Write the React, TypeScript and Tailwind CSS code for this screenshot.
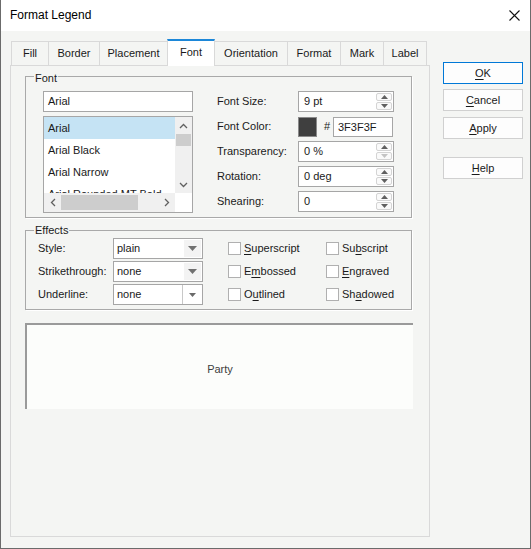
import React from "react";

const F = "font-['Liberation_Sans',Arial,sans-serif]";

const ChevUp = () => (
  <svg width="9" height="6" viewBox="0 0 9 6"><path d="M1 5 L4.5 1.5 L8 5" fill="none" stroke="#606060" strokeWidth="1.3" /></svg>
);
const ChevDown = () => (
  <svg width="9" height="6" viewBox="0 0 9 6"><path d="M1 1 L4.5 4.5 L8 1" fill="none" stroke="#606060" strokeWidth="1.3" /></svg>
);
const ChevLeft = () => (
  <svg width="6" height="9" viewBox="0 0 6 9"><path d="M5 1 L1.5 4.5 L5 8" fill="none" stroke="#606060" strokeWidth="1.3" /></svg>
);
const ChevRight = () => (
  <svg width="6" height="9" viewBox="0 0 6 9"><path d="M1 1 L4.5 4.5 L1 8" fill="none" stroke="#606060" strokeWidth="1.3" /></svg>
);

const Spin = ({ downDisabled }: { downDisabled?: boolean }) => (
  <div className="flex h-full w-[17px] flex-col gap-[1px] py-[1px] pr-[1px]">
    <div className="flex flex-1 items-center justify-center rounded-[2px] border border-[#d4d4d4] bg-[#fafafa]">
      <svg width="7" height="4" viewBox="0 0 7 4"><path d="M0 4 L3.5 0 L7 4Z" fill="#606060" /></svg>
    </div>
    <div className="flex flex-1 items-center justify-center rounded-[2px] border border-[#d4d4d4] bg-[#fafafa]">
      <svg width="7" height="4" viewBox="0 0 7 4"><path d="M0 0 L3.5 4 L7 0Z" fill={downDisabled ? "#c4c4c4" : "#606060"} /></svg>
    </div>
  </div>
);

const SpinInput = ({ value, downDisabled }: { value: string; downDisabled?: boolean }) => (
  <div className="flex h-[21px] w-[96px] items-center border border-[#a6a6a6] bg-white">
    <span className="flex-1 pl-[5px] leading-[19px]">{value}</span>
    <Spin downDisabled={downDisabled} />
  </div>
);

const Combo = ({ value, boxed }: { value: string; boxed?: boolean }) => (
  <div className="flex h-[21px] w-[90px] border border-[#a6a6a6] bg-white">
    <span className="flex-1 pl-[3px] leading-[19px]">{value}</span>
    {boxed ? (
      <div className="mr-[1px] flex w-[19px] items-center justify-center border-l border-[#c8c8c8] bg-white">
        <svg width="7" height="4" viewBox="0 0 7 4"><path d="M0 0 L3.5 4 L7 0Z" fill="#6a6a6a" /></svg>
      </div>
    ) : (
      <div className="m-[1px] flex w-[17px] items-center justify-center bg-[#f3f3f3]">
        <svg width="9" height="5" viewBox="0 0 9 5"><path d="M0 0 L4.5 5 L9 0Z" fill="#707070" /></svg>
      </div>
    )}
  </div>
);

const Check = ({ children }: { children: React.ReactNode }) => (
  <div className="flex items-center">
    <div className="h-[13px] w-[13px] border border-[#b0b0b0] bg-white" />
    <span className="ml-[3px]">{children}</span>
  </div>
);

const U = ({ children }: { children: React.ReactNode }) => <span className="underline underline-offset-[2px]">{children}</span>;

export default function App() {
  return (
    <div className={`${F} flex h-[549px] w-[531px] flex-col border-x border-b border-[#6b6b6b] bg-[#f4f5f3] text-[11px] leading-[13px] text-[#1a1a1a]`}>
      {/* Title bar */}
      <div className="flex h-[31px] shrink-0 items-center justify-between bg-white pl-[9px] pr-[10px]">
        <span className="text-[12px] text-black">Format Legend</span>
        <svg width="11" height="11" viewBox="0 0 11 11"><path d="M0.5 0.5 L10.5 10.5 M10.5 0.5 L0.5 10.5" stroke="#111" strokeWidth="1.1" /></svg>
      </div>

      <div className="flex flex-1">
        {/* Left: tabs + panel */}
        <div className="flex flex-col pl-[9px] pt-[8px]">
          <div className="flex h-[26px] items-end pl-[1px]">
            <div className="flex h-[24px] w-[38px] items-center justify-center border border-b-0 border-[#d9d9d9]">Fill</div>
            <div className="-ml-px flex h-[24px] w-[52px] items-center justify-center border border-b-0 border-[#d9d9d9]">Border</div>
            <div className="-ml-px flex h-[24px] w-[69px] items-center justify-center border border-b-0 border-[#d9d9d9]">Placement</div>
            <div className="relative z-10 -mb-px -ml-px flex h-[27px] w-[48px] items-center justify-center border-x border-t-2 border-[#d9d9d9] border-t-[#1c87d8] bg-white pb-[3px]">Font</div>
            <div className="-ml-px flex h-[24px] w-[74px] items-center justify-center border border-b-0 border-[#d9d9d9]">Orientation</div>
            <div className="-ml-px flex h-[24px] w-[54px] items-center justify-center border border-b-0 border-[#d9d9d9]">Format</div>
            <div className="-ml-px flex h-[24px] w-[44px] items-center justify-center border border-b-0 border-[#d9d9d9]">Mark</div>
            <div className="-ml-px flex h-[24px] w-[44px] items-center justify-center border border-b-0 border-[#d9d9d9]">Label</div>
          </div>

          <div className="flex h-[472px] w-[420px] flex-col border border-[#d9d9d9] pl-[14px] pt-[10px]">
            {/* Font group */}
            <div className="relative h-[142px] w-[387px] border border-[#a9a9a9] shadow-[1px_1px_0_#ffffff]">
              <span className="absolute -top-[5px] left-[8px] bg-[#f4f5f3] px-[1px]">Font</span>
              <div className="flex gap-[24px] pl-[17px] pt-[14px]">
                <div className="flex w-[150px] flex-col gap-[4px]">
                  <div className="h-[21px] border border-[#a6a6a6] bg-white pl-[4px] leading-[19px]">Arial</div>
                  <div className="flex h-[97px] flex-col border border-[#a6a6a6] bg-white">
                    <div className="flex h-[76px]">
                      <div className="flex flex-1 flex-col overflow-hidden">
                        <div className="h-[22px] shrink-0 bg-[#c5e3f4] pl-[4px] leading-[22px]">Arial</div>
                        <div className="h-[22px] shrink-0 pl-[4px] leading-[22px]">Arial Black</div>
                        <div className="h-[22px] shrink-0 pl-[4px] leading-[22px]">Arial Narrow</div>
                        <div className="h-[22px] shrink-0 pl-[4px] leading-[22px]">Arial Rounded MT Bold</div>
                      </div>
                      <div className="flex w-[17px] flex-col bg-[#f0f0f0]">
                        <div className="flex h-[17px] items-center justify-center"><ChevUp /></div>
                        <div className="mx-[1px] h-[12px] bg-[#cdcdcd]" />
                        <div className="flex-1" />
                        <div className="flex h-[17px] items-center justify-center"><ChevDown /></div>
                      </div>
                    </div>
                    <div className="flex h-[19px]">
                      <div className="flex flex-1 bg-[#f0f0f0]">
                        <div className="flex w-[17px] items-center justify-center"><ChevLeft /></div>
                        <div className="my-[2px] w-[77px] bg-[#cdcdcd]" />
                        <div className="flex-1" />
                        <div className="flex w-[17px] items-center justify-center"><ChevRight /></div>
                      </div>
                      <div className="w-[17px] bg-white" />
                    </div>
                  </div>
                </div>

                <div className="flex flex-col gap-[4px]">
                  <div className="flex h-[21px] items-center">
                    <span className="w-[81px]">Font Size:</span>
                    <SpinInput value="9 pt" />
                  </div>
                  <div className="flex h-[21px] items-center">
                    <span className="w-[81px]">Font Color:</span>
                    <div className="h-[20px] w-[19px] border border-[#8a8a8a] bg-[#3f3f3f]" />
                    <span className="ml-[7px] w-[9px]">#</span>
                    <div className="h-[20px] w-[60px] border border-[#a6a6a6] bg-white pl-[4px] leading-[18px]">3F3F3F</div>
                  </div>
                  <div className="flex h-[21px] items-center">
                    <span className="w-[81px]">Transparency:</span>
                    <SpinInput value="0 %" downDisabled />
                  </div>
                  <div className="flex h-[21px] items-center">
                    <span className="w-[81px]">Rotation:</span>
                    <SpinInput value="0 deg" />
                  </div>
                  <div className="flex h-[21px] items-center">
                    <span className="w-[81px]">Shearing:</span>
                    <SpinInput value="0" />
                  </div>
                </div>
              </div>
            </div>

            {/* Effects group */}
            <div className="relative mt-[12px] h-[80px] w-[387px] border border-[#a9a9a9] shadow-[1px_1px_0_#ffffff]">
              <span className="absolute -top-[7px] left-[8px] bg-[#f4f5f3] px-[1px]">Effects</span>
              <div className="flex flex-col gap-[2px] pl-[12px] pt-[7px]">
                <div className="flex h-[21px] items-center">
                  <span className="w-[75px]">Style:</span>
                  <Combo value="plain" />
                  <div className="ml-[25px] w-[98px]"><Check><U>S</U>uperscript</Check></div>
                  <Check>Su<U>b</U>script</Check>
                </div>
                <div className="flex h-[21px] items-center">
                  <span className="w-[75px]">Strikethrough:</span>
                  <Combo value="none" />
                  <div className="ml-[25px] w-[98px]"><Check>E<U>m</U>bossed</Check></div>
                  <Check><U>E</U>ngraved</Check>
                </div>
                <div className="flex h-[21px] items-center">
                  <span className="w-[75px]">Underline:</span>
                  <Combo value="none" boxed />
                  <div className="ml-[25px] w-[98px]"><Check>O<U>u</U>tlined</Check></div>
                  <Check>Sh<U>a</U>dowed</Check>
                </div>
              </div>
            </div>

            {/* Preview */}
            <div className="mt-[13px] flex h-[86px] w-[388px] items-center justify-center border-l-2 border-t-2 border-[#9a9a9a] bg-[#fcfdfb] pt-[5px] text-[#404040]">
              Party
            </div>
          </div>
        </div>

        {/* Right buttons */}
        <div className="ml-[13px] flex flex-col gap-[5px] pt-[31px]">
          <div className="flex h-[22px] w-[80px] items-center justify-center border border-[#0078d7] bg-[#fdfdfd]"><U>O</U>K</div>
          <div className="flex h-[22px] w-[80px] items-center justify-center border border-[#d0d0d0] bg-[#fdfdfd]"><U>C</U>ancel</div>
          <div className="mt-[1px] flex h-[22px] w-[80px] items-center justify-center border border-[#d0d0d0] bg-[#fdfdfd]"><U>A</U>pply</div>
          <div className="mt-[13px] flex h-[22px] w-[80px] items-center justify-center border border-[#d0d0d0] bg-[#fdfdfd]"><U>H</U>elp</div>
        </div>
      </div>
    </div>
  );
}
